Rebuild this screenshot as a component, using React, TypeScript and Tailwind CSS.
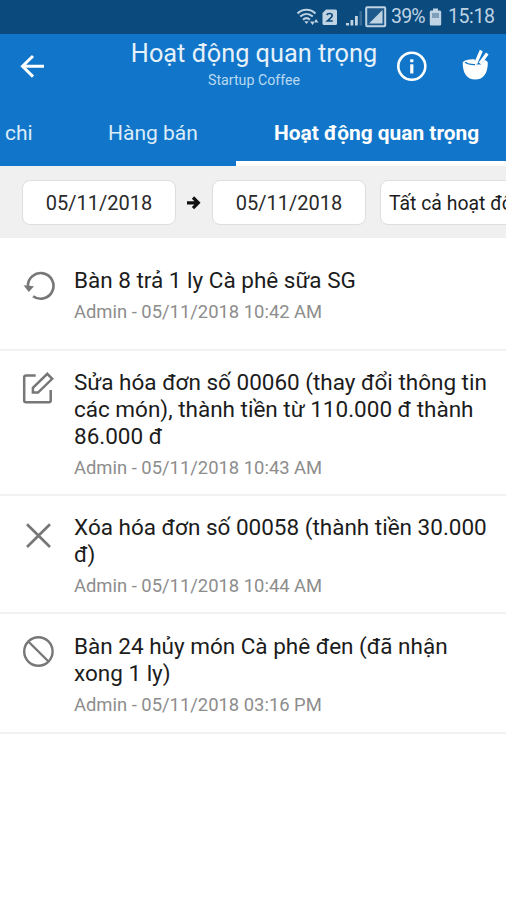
import type { ReactNode } from "react";

function StatusBar() {
  return (
    <div className="flex h-[34px] shrink-0 items-center bg-[#0b4a7d] pl-[296px] text-[#bfd3e3]">
      <svg width="24" height="20" viewBox="0 0 24 20" fill="none" stroke="currentColor" strokeWidth="2">
        <path d="M1.500 6.500C6.500 1.500 14.500 1.500 19.500 6.500" />
        <path d="M4.200 9.500C8 6 13 6 16.800 9.500" />
        <path d="M7 12.700C9.200 10.700 11.800 10.700 14 12.700" />
        <path d="M10.500 17L8.300 14.200H12.700Z" fill="currentColor" stroke="none" />
        <path d="M16.500 18L14 14.500H19ZM20 12L17.800 15.500H22.500Z" fill="currentColor" stroke="none" />
      </svg>
      <svg className="ml-[2px]" width="16" height="17" viewBox="0 0 16 17">
        <path d="M4 0.500H13.500Q15 0.500 15 2V14.500Q15 16 13.500 16H2Q0.500 16 0.500 14.500V4Z" fill="currentColor" />
        <path d="M5 6.200Q5.300 4.500 7.600 4.500Q10.200 4.500 10.200 6.600Q10.200 8 8 9.700L5.500 12H10.800" fill="none" stroke="#0b4a7d" strokeWidth="1.700" />
      </svg>
      <svg className="ml-[8px]" width="18" height="17" viewBox="0 0 18 17" fill="currentColor">
        <path d="M0 14H3V16.500H0ZM4.500 11H7.300V16.500H4.500ZM9 7H11.800V16.500H9Z" />
        <path d="M13.500 2H16V16.500H13.500Z" opacity="0.250" />
      </svg>
      <svg className="ml-[1px]" width="22" height="22" viewBox="0 0 22 22">
        <rect x="1.200" y="1.200" width="19" height="19" rx="1" fill="#1f5a8c" stroke="currentColor" strokeWidth="2" />
        <path d="M4 17.500L17.500 4V17.500Z" fill="currentColor" />
      </svg>
      <span className="ml-[4px] w-[35px] whitespace-nowrap text-[19.5px] leading-[34px] tracking-[-0.8px]">39%</span>
      <svg className="ml-[3px]" width="13" height="18" viewBox="0 0 13 18">
        <path d="M4 0.500H9V2.500H11Q12.200 2.500 12.200 4V16Q12.200 17.500 11 17.500H2Q0.800 17.500 0.800 16V4Q0.800 2.500 2 2.500H4Z" fill="currentColor" />
        <path d="M3 5H10V10H3Z" fill="#7f9fba" />
      </svg>
      <span className="ml-[6px] whitespace-nowrap text-[19.5px] leading-[36px] tracking-[-0.4px]">15:18</span>
    </div>
  );
}

function Header() {
  return (
    <header className="flex h-[78px] shrink-0 bg-[#1176c9] text-white">
      <div className="flex w-[131px] items-start pl-[19px] pt-[20px]">
        <svg width="26" height="24" viewBox="0 0 26 24" fill="none" stroke="currentColor" strokeWidth="3">
          <path d="M25 12.300H3M14 2L3.500 12.300L14 22.600" />
        </svg>
      </div>
      <div className="flex w-[246px] flex-col items-center">
        <h1 className="h-[36px] whitespace-nowrap text-[25.3px] leading-[39px] text-[#e6f1fa]">Hoạt động quan trọng</h1>
        <p className="whitespace-nowrap text-[14.2px] leading-[20px] text-[#b9d9f2]">Startup Coffee</p>
      </div>
      <div className="flex items-start pl-[19px] pt-[12px]">
        <svg className="mt-[5px]" width="32" height="32" viewBox="0 0 32 32" fill="none" stroke="currentColor" strokeWidth="2.600">
          <circle cx="15.800" cy="15.300" r="13.500" />
          <path d="M15.800 13.300V22.500" strokeWidth="3.200" />
          <path d="M15.800 8.300V11.200" strokeWidth="3.200" />
        </svg>
        <svg className="ml-[34px]" width="28" height="36" viewBox="0 0 28 36">
          <path d="M0.700 17C0.700 14.700 6 13.200 12.500 13.200L14.500 18.500H19L22.500 14Q25.800 15 25.800 17C25.800 27 21.500 33.600 13.300 33.600C5 33.600 0.700 27 0.700 17Z" fill="currentColor" />
          <path d="M3 16.300Q6.500 18.800 13 18.600" fill="none" stroke="#1176c9" strokeWidth="1.400" />
          <path d="M13.700 17.500L19.300 4.500M18 17.500L25.300 7.500" fill="none" stroke="currentColor" strokeWidth="3.200" />
        </svg>
      </div>
    </header>
  );
}

function Tabs() {
  return (
    <nav className="flex h-[54px] shrink-0 bg-[#1176c9] text-[21px] leading-[42px] text-[#dcecf9]">
      <div className="w-[70px] whitespace-nowrap pl-[5px]">chi</div>
      <div className="w-[166px] whitespace-nowrap text-center">Hàng bán</div>
      <div className="w-[270px] whitespace-nowrap border-b-[5px] border-white pl-[38px] text-[20.9px] font-bold text-white">
        Hoạt động quan trọng
      </div>
    </nav>
  );
}

function Filters() {
  return (
    <div className="flex h-[72px] shrink-0 items-start overflow-hidden bg-[#f0f0f0] pl-[22px] pt-[14px] text-[20px] leading-[44px] text-[#2a2a2a]">
      <div className="h-[45px] w-[154px] shrink-0 rounded-[8px] border border-[#dedede] bg-white text-center">05/11/2018</div>
      <svg className="ml-[10px] mt-[15px] shrink-0" width="16" height="16" viewBox="0 0 16 16" fill="none" stroke="#111" strokeWidth="3.200">
        <path d="M1 7.800H12M7 2.500L12.300 7.800L7 13.100" />
      </svg>
      <div className="ml-[10px] h-[45px] w-[154px] shrink-0 rounded-[8px] border border-[#dedede] bg-white text-center">05/11/2018</div>
      <div className="ml-[14px] h-[45px] w-[190px] shrink-0 whitespace-nowrap rounded-[8px] border border-[#dedede] bg-white pl-[8px] text-[19.4px] leading-[46px] text-[#1c1c1c]">
        Tất cả hoạt động
      </div>
    </div>
  );
}

type Activity = { icon: ReactNode; lines: string[]; meta: string; row: string };

const activities: Activity[] = [
  {
    row: "h-[113px] pt-[29px]",
    icon: (
      <svg width="34" height="34" viewBox="0 0 34 34" fill="none" stroke="#777" strokeWidth="2.600">
        <path d="M5.900 19A12.800 12.800 0 1 1 11.100 29.200" />
        <path d="M1.500 18.200L12 19.200L6.800 25Z" fill="#777" stroke="none" />
      </svg>
    ),
    lines: ["Bàn 8 trả 1 ly Cà phê sữa SG"],
    meta: "Admin - 05/11/2018 10:42 AM",
  },
  {
    row: "h-[145px] pt-[18px]",
    icon: (
      <svg width="34" height="36" viewBox="0 0 34 36" fill="none" stroke="#777" strokeWidth="2.500">
        <path d="M13.700 6.500H4Q2.200 6.500 2.200 8.300V31.500Q2.200 33.200 4 33.200H27Q28.700 33.200 28.700 31.500V21" />
        <path d="M10.900 23.600V18.800L25.300 4.800L30.200 9.800L16 23.600Z" />
      </svg>
    ),
    lines: ["Sửa hóa đơn số 00060 (thay đổi thông tin", "các món), thành tiền từ 110.000 đ thành", "86.000 đ"],
    meta: "Admin - 05/11/2018 10:43 AM",
  },
  {
    row: "h-[118px] pt-[18px]",
    icon: (
      <svg width="34" height="34" viewBox="0 0 34 34" fill="none" stroke="#777" strokeWidth="2.700">
        <path d="M5 10.300L28 33M28 10.300L5 33" />
      </svg>
    ),
    lines: ["Xóa hóa đơn số 00058 (thành tiền 30.000", "đ)"],
    meta: "Admin - 05/11/2018 10:44 AM",
  },
  {
    row: "h-[120px] pt-[19px]",
    icon: (
      <svg width="34" height="34" viewBox="0 0 34 34" fill="none" stroke="#777" strokeWidth="2.400">
        <circle cx="16.400" cy="18.500" r="14.200" />
        <path d="M6.300 8.500L26.500 28.500" />
      </svg>
    ),
    lines: ["Bàn 24 hủy món Cà phê đen (đã nhận", "xong 1 ly)"],
    meta: "Admin - 05/11/2018 03:16 PM",
  },
];

function ActivityRow({ icon, lines, meta, row }: Activity) {
  return (
    <li className={`flex shrink-0 border-b-2 border-[#f2f2f2] pl-[22px] ${row}`}>
      <div className="w-[52px] shrink-0">{icon}</div>
      <div className="whitespace-nowrap">
        <div className="text-[22.5px] leading-[27px] text-[#1c1c1c]">
          {lines.map((line) => (
            <p key={line}>{line}</p>
          ))}
        </div>
        <p className="mt-[5px] text-[18.4px] leading-[26px] text-[#8d8d8d]">{meta}</p>
      </div>
    </li>
  );
}

export default function App() {
  return (
    <div className="flex h-[900px] w-[506px] flex-col overflow-hidden bg-white font-['Roboto','Noto_Sans',sans-serif]">
      <StatusBar />
      <Header />
      <Tabs />
      <Filters />
      <ul className="flex flex-col">
        {activities.map((a) => (
          <ActivityRow key={a.meta} {...a} />
        ))}
      </ul>
    </div>
  );
}
